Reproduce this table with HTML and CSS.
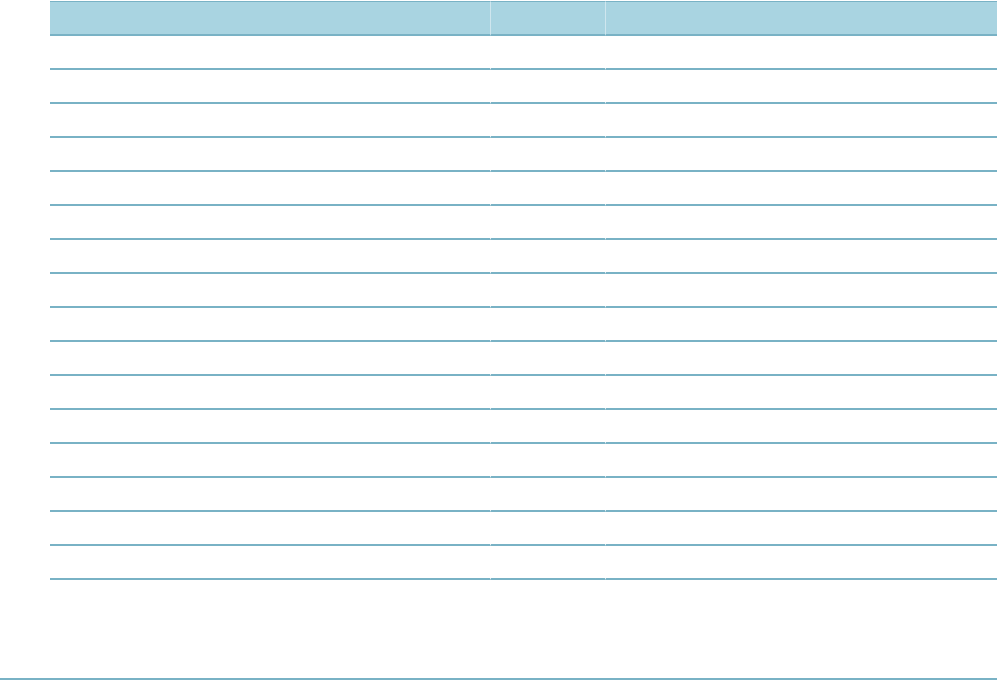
FILE: index.html
```html
<!DOCTYPE html>
<html>
<head>
    <meta charset="UTF-8">
    <title>Report</title>
    <link rel="stylesheet" href="styles.css">
</head>
<body>

<div class="page">
    <table class="report">
        <colgroup>
            <col class="col-name">
            <col class="col-id">
            <col class="col-note">
        </colgroup>
        <thead>
            <tr><th></th><th></th><th></th></tr>
        </thead>
        <tbody>
            <tr><td></td><td></td><td></td></tr>
            <tr><td></td><td></td><td></td></tr>
            <tr><td></td><td></td><td></td></tr>
            <tr><td></td><td></td><td></td></tr>
            <tr><td></td><td></td><td></td></tr>
            <tr><td></td><td></td><td></td></tr>
            <tr><td></td><td></td><td></td></tr>
            <tr><td></td><td></td><td></td></tr>
            <tr><td></td><td></td><td></td></tr>
            <tr><td></td><td></td><td></td></tr>
            <tr><td></td><td></td><td></td></tr>
            <tr><td></td><td></td><td></td></tr>
            <tr><td></td><td></td><td></td></tr>
            <tr><td></td><td></td><td></td></tr>
            <tr><td></td><td></td><td></td></tr>
            <tr><td></td><td></td><td></td></tr>
        </tbody>
    </table>
</div>

</body>
</html>
```

FILE: styles.css
```css
body {
    margin: 0;
    font-family: "Liberation Sans", Arial, sans-serif;
    color: #444;
    background: #fff;
}

.page {
    width: 947px;
    height: 677px;
    padding: 1px 0 0 50px;
    border-bottom: 2px solid #79b2c5;
}

.report {
    width: 947px;
    table-layout: fixed;
    border-collapse: separate;
    border-spacing: 0;
}

.col-name { width: 440px; }
.col-id { width: 115px; }
.col-note { width: 392px; }

.report th,
.report td {
    padding: 0;
    height: 32px;
}

.report th {
    background: #a9d4e1;
    border-top: 1px solid #79b2c5;
    border-bottom: 2px solid #79b2c5;
}

.report th + th {
    border-left: 1px solid #cfe6ee;
}

.report td {
    border-bottom: 2px solid #79b2c5;
}

.report td + td {
    border-left: 1px solid #fff;
}
```
